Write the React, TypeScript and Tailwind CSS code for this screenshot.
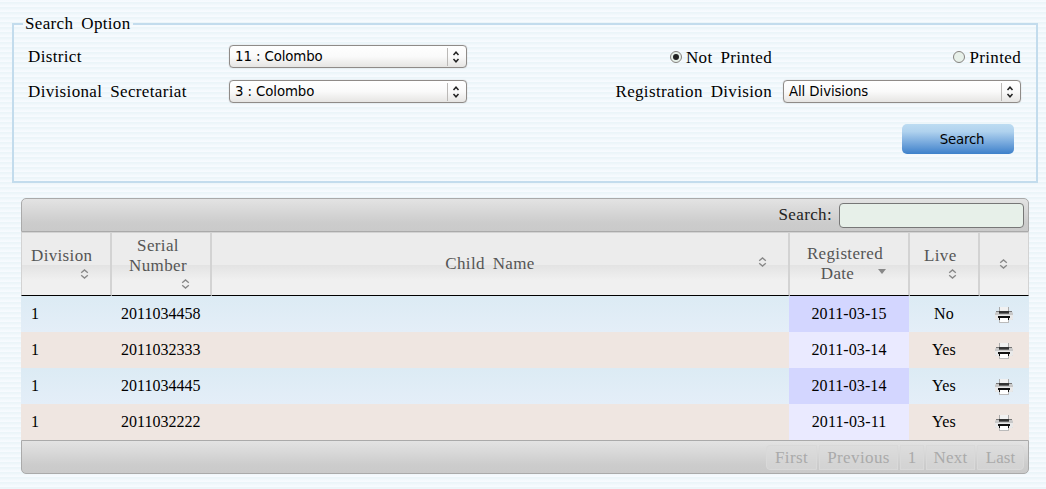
import React from "react";

const serif = "font-['Liberation_Serif',serif]";
const label = "text-[17px] leading-5 tracking-[0.35px] [word-spacing:3.3px] whitespace-nowrap";

function Select({ value }: { value: string }) {
  return (
    <div className="mb-px flex h-[23px] w-[238px] items-center rounded-[4px] border border-[#8f8b88] bg-linear-to-b from-white via-[#fafafa] to-[#e6e5e3] font-['DejaVu_Sans',sans-serif] text-[13.33px] shadow-[0_0_1px_#aaa]">
      <span className="flex-1 pl-[5px] leading-5 tracking-[-0.1px]">{value}</span>
      <span className="h-[18px] w-px bg-[#bbb9b7]" />
      <svg width="18" height="18" viewBox="0 0 18 18" fill="none" stroke="#222" strokeWidth="1.5">
        <path d="M5.5 7 8 4.2 10.5 7M5.5 11 8 13.8 10.5 11" />
      </svg>
    </div>
  );
}

function Radio({ checked, text }: { checked?: boolean; text: string }) {
  return (
    <div className="flex items-center gap-1 pt-0.5">
      <span className="mb-[3px] flex size-3 items-center justify-center rounded-full border border-[#85827f] bg-[#e7f0e9]">
        {checked && <span className="size-1.5 rounded-full bg-[#222]" />}
      </span>
      <span className={label}>{text}</span>
    </div>
  );
}

function Sort() {
  return (
    <svg width="9" height="10" viewBox="0 0 9 10" fill="none" stroke="#888" strokeWidth="1.3">
      <path d="M1.2 3.8 4.5.9 7.8 3.8M1.2 6.2 4.5 9.1 7.8 6.2" />
    </svg>
  );
}

function Printer() {
  return (
    <svg width="18" height="16" viewBox="0 0 18 16">
      <path d="M2 4H16L18 6V12L17 13H1L0 12V6Z" fill="#c8c8c8" />
      <path d="M0 8H18V12L17 13H1L0 12Z" fill="#e9e9e9" />
      <path d="M1 4H4V5H1ZM14 4H17V5H14Z" fill="#777" />
      <path d="M4 0H14V5H4Z" fill="#f1f1f1" />
      <path d="M4 0H5V4H4ZM13 0H14V4H13Z" fill="#aaa" />
      <path d="M4 4H14V6H4Z" fill="#333" />
      <path d="M4 6H14V7H4Z" fill="#666" />
      <path d="M3 9H15V11H3ZM4 11H5V13H4ZM13 11H14V13H13Z" fill="#111" />
      <path d="M5 11H13V16H5Z" fill="#fff" />
      <path d="M4 13H5V16H4ZM13 13H14V16H13ZM5 15H13V16H5Z" fill="#bbb" />
    </svg>
  );
}

const rows = [
  ["2011034458", "2011-03-15", "No"],
  ["2011032333", "2011-03-14", "Yes"],
  ["2011034445", "2011-03-14", "Yes"],
  ["2011032222", "2011-03-11", "Yes"],
];

const bar = "bg-linear-to-b from-[#e3e3e3] via-[#cccccc] via-75% to-[#cacaca] border border-[#aaa]";
const head = "border-b border-black border-r-2 border-r-[#d3d3d3]";
const pageButton = "flex h-[25px] items-center justify-center border border-[#d9d9d9] bg-[#dcdcdc]/50 text-[17px] leading-5";

export default function App() {
  return (
    <div className={`h-[489px] w-[1046px] overflow-hidden bg-[linear-gradient(to_bottom,#f3f9fd_0px,#f8fbfe_2px,#ebf5f9_2px,#ebf5f9_3px,#f0f7fb_4px,#f3f9fc_5px)] bg-[length:100%_5px] px-3 text-black ${serif}`}>
      <div className="flex h-[183px] w-[1026px] flex-col">
        <fieldset className="mt-3.5 h-[169px] border-2 border-[#c3dced] px-3.5">
          <legend className={`-ml-[5px] px-0.5 ${label}`}>Search Option</legend>
          <div className="flex h-[71px] justify-between pt-[11px]">
            <div className="grid grid-cols-[201px_238px] grid-rows-[24px_24px] items-center gap-y-[11px]">
              <span className={label}>District</span>
              <Select value="11 : Colombo" />
              <span className={label}>Divisional Secretariat</span>
              <Select value="3 : Colombo" />
            </div>
            <div className="mr-[1px] grid grid-cols-[160px_238px] grid-rows-[24px_24px] items-center justify-items-end gap-x-[11px] gap-y-[11px]">
              <Radio checked text="Not Printed" />
              <Radio text="Printed" />
              <span className={label}>Registration Division</span>
              <Select value="All Divisions" />
            </div>
          </div>
          <div className="flex justify-end pt-[19px] pr-2">
            <button className="h-[30px] w-28 rounded-[5px] bg-linear-to-b from-[#bddcf2] via-[#b0d2ee] via-25% to-[#3c80ca] pt-0.5 pl-2 font-['DejaVu_Sans',sans-serif] text-[13.33px] tracking-[-0.2px]">Search</button>
          </div>
        </fieldset>
      </div>
      <div className="mt-[15px] ml-[9px] w-[1008px]">
        <div className={`flex h-[34px] items-center justify-end gap-[7px] rounded-t-[5px] pr-1 ${bar}`}>
          <span className={`text-[#222] ${label}`}>Search:</span>
          <span className="h-[25px] w-[185px] rounded-[4px] border border-[#777] bg-[#e7f0e9]" />
        </div>
        <div className="grid h-16 grid-cols-[91px_100px_578px_120px_70px_49px] border-t border-[#d3d3d3] bg-[linear-gradient(to_bottom,#ececec_0%,#ececec_50%,#e3e3e3_51%,#f0f0f0_75%,#f0f0f0_100%)] text-[#555]">
          <div className={`${head} flex flex-col border-l border-l-[#d3d3d3] pt-[13px] pl-[9px]`}>
            <span className={label}>Division</span>
            <span className="ml-[49px] pt-[3px]"><Sort /></span>
          </div>
          <div className={`${head} flex flex-col items-center pt-[3px] pr-[6px]`}>
            <span className={label}>Serial</span>
            <span className={label}>Number</span>
            <span className="ml-[54px] pt-[3px]"><Sort /></span>
          </div>
          <div className={`${head} flex items-center justify-end pr-[21px]`}>
            <span className={`flex-1 pl-2.5 text-center ${label}`}>Child Name</span>
            <span className="pb-[5px]"><Sort /></span>
          </div>
          <div className={`${head} flex flex-col items-center pt-[11px] pr-2`}>
            <span className={label}>Registered</span>
            <span className="flex items-center gap-[24px] pl-[17px]">
              <span className={label}>Date</span>
              <svg width="8" height="5" viewBox="0 0 8 5" className="mb-[5px]"><path d="M0 0H8L4 5Z" fill="#888" /></svg>
            </span>
          </div>
          <div className={`${head} flex flex-col pt-[13px] pl-[14px]`}>
            <span className={label}>Live</span>
            <span className="ml-6 pt-[3px]"><Sort /></span>
          </div>
          <div className="flex items-center justify-center border-r border-b border-r-[#d3d3d3] border-b-black pr-0.5"><Sort /></div>
        </div>
        {rows.map(([serial, date, live], i) => (
          <div key={serial} className={`grid h-9 grid-cols-[90px_100px_578px_120px_70px_50px] items-center text-base leading-5 ${i % 2 ? "bg-[#efe6e1]" : "bg-linear-to-b from-[#dcebf4] to-[#e4eef8]"}`}>
            <span className="pl-2.5">1</span>
            <span className="pl-2.5">{serial}</span>
            <span />
            <span className={`flex h-9 items-center justify-center tracking-[0.1px] ${i % 2 ? "bg-[#eaeaff]" : "bg-[#d3d6ff]"}`}>{date}</span>
            <span className="text-center tracking-[0.2px]">{live}</span>
            <span className="flex justify-center pt-0.5"><Printer /></span>
          </div>
        ))}
        <div className={`flex h-[34px] items-center justify-end gap-0.5 rounded-b-[5px] pt-px pr-1 text-[#aaa] ${bar}`}>
          <span className={`${pageButton} w-[51px] rounded-l-[4px] tracking-[0.4px]`}>First</span>
          <span className={`${pageButton} w-[79px] tracking-[0.4px]`}>Previous</span>
          <span className={`${pageButton} w-6`}>1</span>
          <span className={`${pageButton} w-[49px] tracking-[0.2px]`}>Next</span>
          <span className={`${pageButton} w-[47px] rounded-r-[4px]`}>Last</span>
        </div>
      </div>
    </div>
  );
}
